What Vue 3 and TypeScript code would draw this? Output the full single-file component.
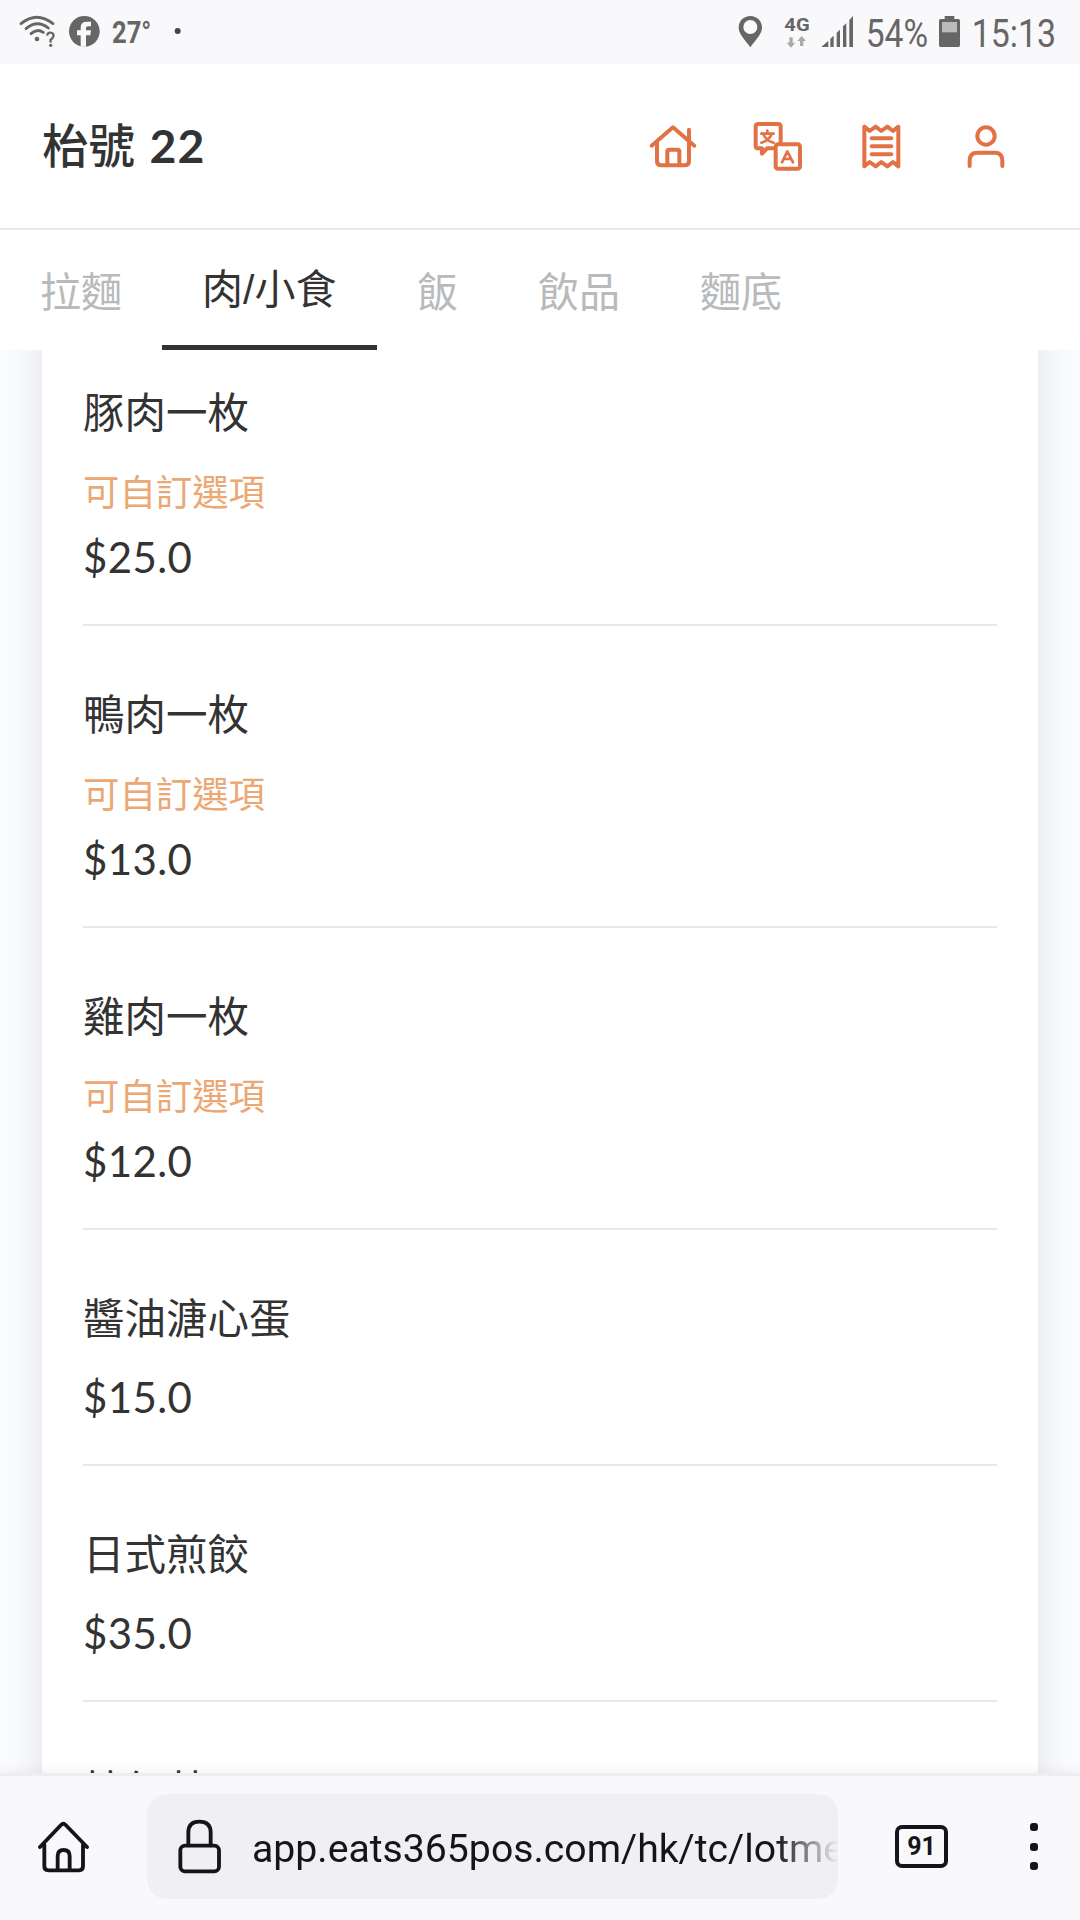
<script setup lang="ts">
interface Tab { label: string; active?: boolean }
interface MenuItem { name: string; price: string; custom?: boolean }

const tabs: Tab[] = [
  { label: '拉麵' },
  { label: '肉/小食', active: true },
  { label: '飯' },
  { label: '飲品' },
  { label: '麵底' },
]

const items: MenuItem[] = [
  { name: '豚肉一枚', price: '$25.0', custom: true },
  { name: '鴨肉一枚', price: '$13.0', custom: true },
  { name: '雞肉一枚', price: '$12.0', custom: true },
  { name: '醬油溏心蛋', price: '$15.0' },
  { name: '日式煎餃', price: '$35.0' },
  { name: '枝紅菜', price: '$35.0' },
]
</script>

<template>
  <div class="screen">
    <div class="status">
      <svg class="status-left" width="200" height="64" viewBox="0 0 600 192">
        <g fill="none" stroke="#666" stroke-width="8.5" stroke-linecap="round">
          <path d="M63 71Q110 32 159 71" />
          <path d="M78 86Q112 58 145 84" />
          <path d="M93 101Q112 84 130 97" />
          <path d="M142 104q2-7 10-6q11 2 8 12q-2 5-8 9v6" stroke-width="7" />
        </g>
        <circle cx="111" cy="117" r="7" fill="#666" />
        <circle cx="152" cy="136" r="5" fill="#666" />
        <circle cx="253" cy="94" r="46" fill="#666" />
        <path d="M242 140V106H231V91H242V82Q242 65 260 65H273V79H264Q258 79 258 85V91H273L271 106H258V140Z" fill="#f9f9fb" />
        <text x="336" y="128" class="temp" textLength="118" lengthAdjust="spacingAndGlyphs">27°</text>
        <circle cx="533" cy="93" r="9" fill="#444" />
      </svg>
      <svg class="status-right" width="360" height="64" viewBox="0 0 1080 192">
        <path fill="#666" fill-rule="evenodd" d="M91 48C71 48 56 63 56 83C56 102 79 124 91 142C103 124 126 102 126 83C126 63 111 48 91 48ZM91 60A21 21 0 1 1 91 102A21 21 0 1 1 91 60Z" />
        <text x="193" y="94" class="net" textLength="76" lengthAdjust="spacingAndGlyphs">4G</text>
        <path fill="#aaa" d="M208 112h10v16h8l-13 15l-13-15h8ZM240 138h10v-15h8l-13-15l-13 15h8Z" />
        <g fill="#666">
          <path d="M304 141L325 122V141Z" />
          <path d="M331 116L341 107V141H331Z" />
          <path d="M350 98L360 89V141H350Z" />
          <path d="M369 79L379 70V141H369Z" />
          <path d="M388 60L399 48V141H388Z" />
        </g>
        <text x="437" y="140" class="big" textLength="187" lengthAdjust="spacingAndGlyphs">54%</text>
        <path fill="#666" d="M674 57V48H703V57H715Q720 57 720 62V136Q720 141 715 141H662Q657 141 657 136V62Q657 57 662 57Z" />
        <rect x="666" y="66" width="45" height="31" fill="#bbb" />
        <text x="755" y="140" class="big" textLength="253" lengthAdjust="spacingAndGlyphs">15:13</text>
      </svg>
    </div>

    <header class="header">
      <h1>枱號 <b>22</b></h1>
      <nav class="actions">
        <svg viewBox="87 63 144 150">
          <path d="M95 137L159 82L223 137M207 122V89M111 126V183Q111 196 124 196H194Q207 196 207 183V126M142 195V154Q142 149 147 149H173Q178 149 178 154V195" />
        </svg>
        <svg viewBox="399 63 144 150">
          <path d="M482 132V80Q482 72 474 72H415Q407 72 407 80V137Q407 145 415 145H426V161L441 145H463" />
          <rect x="467" y="133" width="73" height="73" rx="7" />
          <path d="M424 101H461M442 92V100M431 104Q438 121 461 128M454 104Q447 121 424 128M486 187L502 154L519 187M492 177H513" stroke-width="8" />
        </svg>
        <svg viewBox="711 63 144 150">
          <path d="M733 80V199L749 186L767 199L784 186L802 199L819 186L835 199V80L819 93L802 80L784 93L767 80L749 93ZM755 115H814M755 139H814M755 163H814" />
        </svg>
        <svg viewBox="1023 63 144 150">
          <circle cx="1098" cy="108" r="26" />
          <path d="M1049 198V181Q1049 158 1072 158H1124Q1147 158 1147 181V198" />
        </svg>
      </nav>
    </header>

    <nav class="tabs">
      <div v-for="t in tabs" :key="t.label" class="tab" :class="{ active: t.active }">{{ t.label }}</div>
    </nav>

    <main class="content">
      <section class="card">
        <article v-for="item in items" :key="item.name" class="item">
          <div class="name">{{ item.name }}</div>
          <div v-if="item.custom" class="custom">可自訂選項</div>
          <div class="price" :class="{ tight: item.custom }">{{ item.price }}</div>
        </article>
      </section>
    </main>

    <footer class="browser">
      <svg class="home" width="54" height="54" viewBox="108 237 162 162">
        <path d="M120 318L183 252Q190 245 197 252L261 318M133 310V376Q133 388 145 388H237Q249 388 249 376V310M173 386V345Q173 327 191 327Q209 327 209 345V386" />
      </svg>
      <div class="address">
        <svg width="48" height="60" viewBox="528 231 144 180">
          <path d="M565 316V278Q565 245 598 245Q632 245 632 278V316" />
          <rect x="541" y="317" width="116" height="77" rx="14" />
        </svg>
        <div class="url">app.eats365pos.com/hk/tc/lotme</div>
      </div>
      <div class="count">91</div>
      <div class="dots"><i></i><i></i><i></i></div>
    </footer>
  </div>
</template>

<style>
body { margin: 0; background: #fff; }
</style>

<style scoped>
.screen {
  width: 1080px;
  height: 1920px;
  display: flex;
  flex-direction: column;
  overflow: hidden;
  background: #fff;
  color: #333;
  font-family: Lato, "Noto Sans CJK TC", sans-serif;
}
.status {
  height: 64px;
  flex: none;
  display: flex;
  justify-content: space-between;
  background: #f9f9fb;
}
.status text { fill: #666; font-family: Roboto, sans-serif; }
.status .temp { font-size: 92px; font-weight: 700; }
.status .net { font-size: 54px; font-weight: 700; }
.status .big { font-size: 117px; }
.header {
  height: 164px;
  flex: none;
  display: flex;
  align-items: center;
  justify-content: space-between;
  padding: 0 71px 0 42px;
  border-bottom: 2px solid #e8e8e8;
}
h1 {
  margin: 0;
  padding-bottom: 2px;
  font-size: 46.4px;
  line-height: 60px;
  font-weight: 500;
  white-space: pre;
}
h1 b { margin-left: 3px; font-weight: 700; letter-spacing: 1.2px; }
.actions { display: flex; gap: 56px; }
.actions svg {
  width: 48px;
  height: 50px;
  overflow: visible;
  fill: none;
  stroke: #e27145;
  stroke-width: 12;
  stroke-linecap: round;
  stroke-linejoin: round;
}
.tabs { height: 120px; flex: none; display: flex; }
.tab {
  padding: 0 40px;
  font-family: "Liberation Sans", "Noto Sans CJK TC", sans-serif;
  font-size: 41px;
  line-height: 127px;
  color: #b8babc;
  white-space: nowrap;
}
.tab.active {
  box-sizing: border-box;
  height: 120px;
  padding: 0 40.5px 0 40px;
  line-height: 121px;
  color: #333;
  border-bottom: 5px solid #333;
}
.content {
  flex: 1;
  min-height: 0;
  overflow: hidden;
  background: #f9fbff;
}
.card {
  margin: -26px 42px 0;
  padding: 0 41px;
  background: #fff;
  box-shadow: 0 0 34px rgba(0, 0, 0, 0.11);
}
.item { padding: 60px 0 39px; border-bottom: 2px solid #e8e8e8; }
.name { font-size: 41.5px; line-height: 56px; }
.custom {
  margin-top: 27px;
  font-size: 36.4px;
  line-height: 51px;
  color: #eba774;
}
.price { margin-top: 23px; font-size: 42px; line-height: 56px; letter-spacing: 0.4px; }
.price.tight { margin-top: 11px; }
.browser {
  position: relative;
  height: 147px;
  flex: none;
  box-sizing: border-box;
  display: flex;
  align-items: center;
  padding: 0 42px 3px 36px;
  background: #f9f9fb;
  border-top: 3px solid #eeeeef;
  box-shadow: 0 0 12px rgba(0, 0, 0, 0.07);
}
.browser svg {
  flex: none;
  fill: none;
  stroke: #15141a;
  stroke-width: 11.5;
  stroke-linecap: round;
  stroke-linejoin: round;
}
.address {
  width: 691px;
  height: 105px;
  margin-left: 57px;
  border-radius: 20px;
  background: #f0eff4;
  display: flex;
  align-items: center;
  padding-left: 29px;
  box-sizing: border-box;
  overflow: hidden;
}
.url {
  flex: 1;
  margin-left: 28px;
  padding-top: 4px;
  font-family: Roboto, sans-serif;
  font-size: 39.2px;
  line-height: 60px;
  color: #15141a;
  white-space: nowrap;
  overflow: hidden;
  -webkit-mask-image: linear-gradient(to right, #000 calc(100% - 62px), transparent);
  mask-image: linear-gradient(to right, #000 calc(100% - 62px), transparent);
}
.count {
  box-sizing: border-box;
  width: 53px;
  height: 43px;
  margin-left: 57px;
  border: 4px solid #15141a;
  border-radius: 7px;
  font: 700 25px/35px Roboto, sans-serif;
  text-align: center;
  color: #15141a;
}
.dots {
  margin-left: auto;
  display: flex;
  flex-direction: column;
  gap: 11.5px;
}
.dots i { width: 8px; height: 8px; border-radius: 3px; background: #15141a; }
</style>
